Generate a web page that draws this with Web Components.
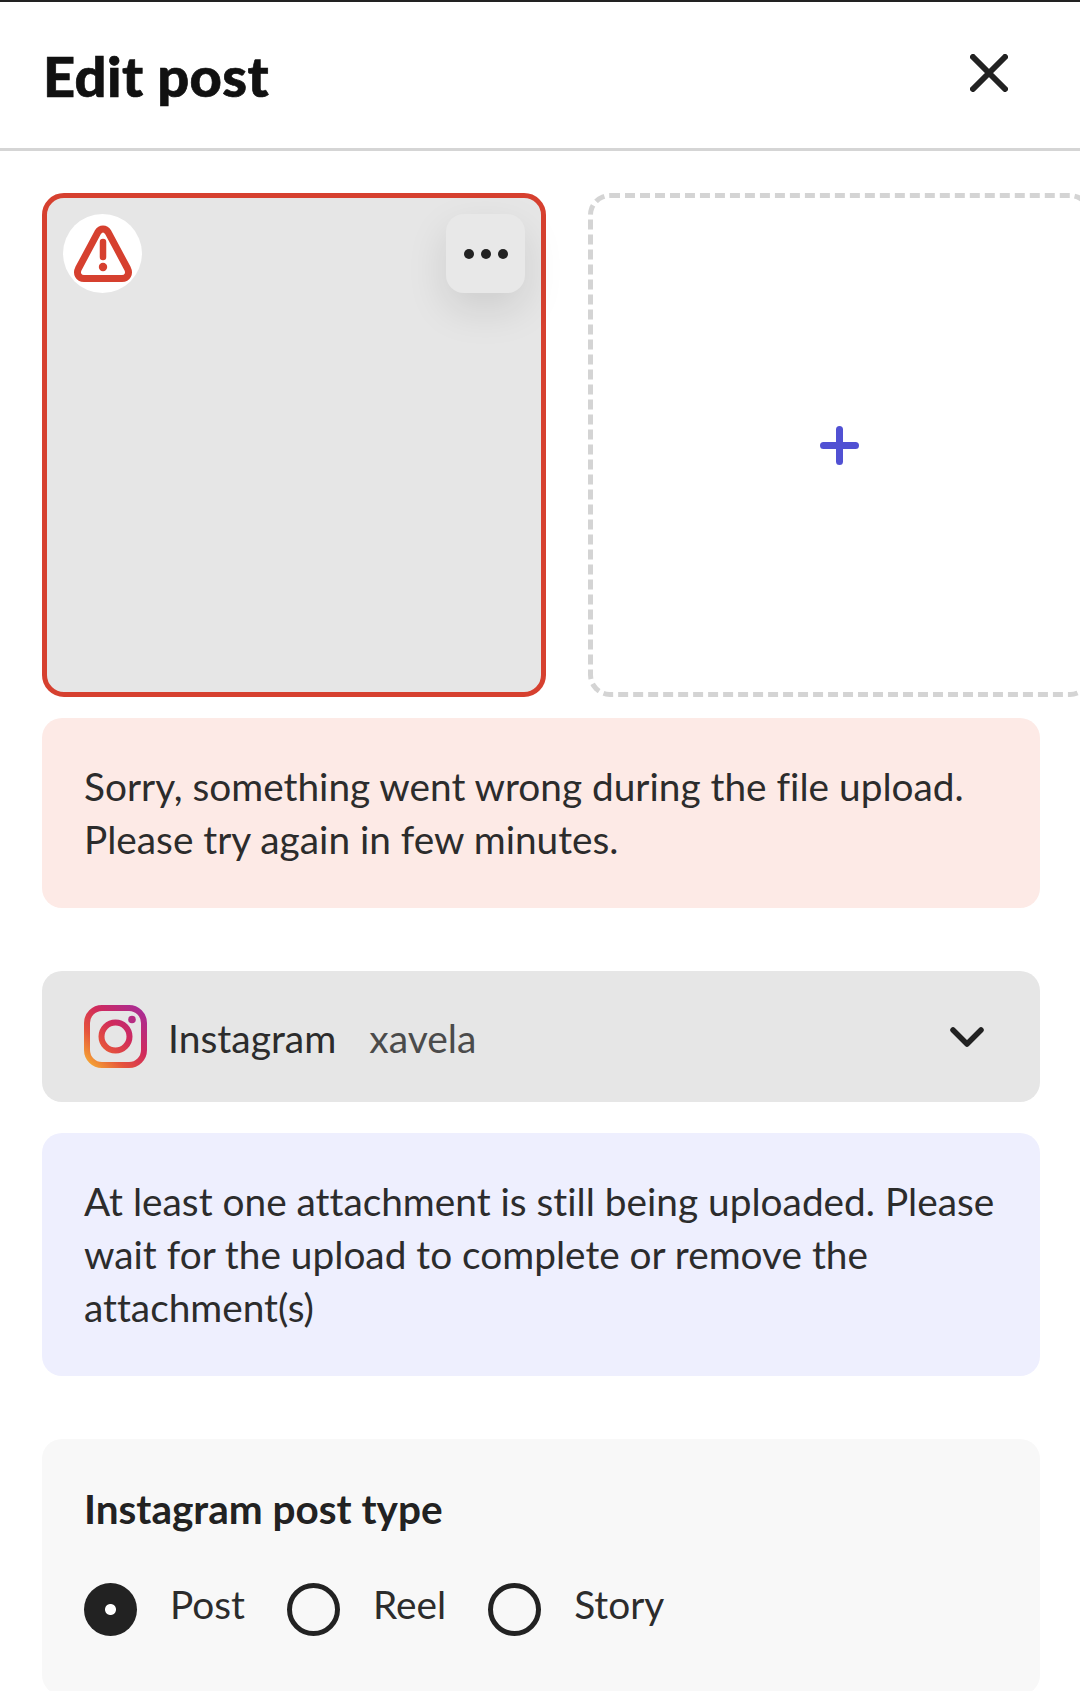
<!DOCTYPE html>
<html lang="en">
<head>
<meta charset="utf-8">
<title>Edit post</title>
<style>
	html, body {
		margin: 0;
		height: 1691px;
		overflow: hidden;
		background: #fff;
	}

	body {
		font-family: Lato, "Open Sans", "Liberation Sans", sans-serif;
		color: #2c2c2c;
		font-variant-ligatures: none;
	}
</style>
</head>
<body>
<edit-post>
	<post-header slot="header">Edit post</post-header>
	<media-row slot="media"></media-row>
	<notice-box tone="error" style="margin-top: 21px">Sorry, something went wrong during the file upload. Please try again in few minutes.</notice-box>
	<account-select style="margin-top: 63px" network="Instagram" account="xavela"></account-select>
	<notice-box tone="info" style="margin-top: 31px">At least one attachment is still being uploaded. Please wait for the upload to complete or remove the attachment(s)</notice-box>
	<post-type style="margin-top: 63px" heading="Instagram post type">
		<radio-option checked>Post</radio-option>
		<radio-option>Reel</radio-option>
		<radio-option>Story</radio-option>
	</post-type>
</edit-post>

<script>
class EditPost extends HTMLElement {

	constructor() {
		super();
		this.attachShadow({mode: 'open'}).innerHTML = `
			<style>
				:host {
					display: block;
					height: 1691px;
					overflow: hidden;
					box-sizing: border-box;
					border-top: 2px solid #222;
				}

				main {
					padding: 42px 40px 0 42px;
				}
			</style>
			<slot name="header"></slot>
			<main>
				<slot name="media"></slot>
				<slot></slot>
			</main>
		`;
	};
};

class PostHeader extends HTMLElement {

	constructor() {
		super();
		this.attachShadow({mode: 'open'}).innerHTML = `
			<style>
				:host {
					display: flex;
					align-items: center;
					justify-content: space-between;
					box-sizing: border-box;
					height: 149px;
					padding: 0 72px 0 43px;
					border-bottom: 3px solid #d5d5d5;
				}

				h1 {
					margin: 0;
					font-size: 56px;
					font-weight: 900;
					color: #111;
					letter-spacing: 0.4px;
					-webkit-text-stroke: 0.7px #111;
				}

				svg {
					display: block;
					margin-bottom: 4px;
				}
			</style>
			<h1><slot></slot></h1>
			<svg width="38" height="38" viewBox="0 0 38 38" fill="none" stroke="#222" stroke-width="6" stroke-linecap="round">
				<path d="M3 3 35 35M35 3 3 35"/>
			</svg>
		`;
	};
};

class MediaRow extends HTMLElement {

	constructor() {
		super();
		this.attachShadow({mode: 'open'}).innerHTML = `
			<style>
				:host {
					display: flex;
					gap: 42px;
					width: 1038px;
					overflow: hidden;
				}

				.tile {
					flex: none;
					box-sizing: border-box;
					width: 504px;
					height: 504px;
					border-radius: 22px;
				}

				.failed {
					display: flex;
					justify-content: space-between;
					align-items: flex-start;
					padding: 16px;
					background: #e6e6e6;
					border: 5px solid #d6402f;
				}

				.badge, .more {
					display: flex;
					align-items: center;
					justify-content: center;
					width: 79px;
					height: 79px;
				}

				.badge {
					background: #fff;
					border-radius: 50%;
				}

				.more {
					background: #e8e8e8;
					border-radius: 18px;
					box-shadow: 0 16px 42px rgba(0, 0, 0, 0.11);
				}

				.add {
					display: flex;
					align-items: center;
					justify-content: center;
					border: 5px dashed #d4d4d4;
					padding-right: 2px;
				}
			</style>
			<div class="tile failed">
				<div class="badge">
					<svg width="60" height="58" viewBox="0 0 60 58" fill="none">
						<path d="M30 4 C27.5 4 26 5.4 24.8 7.4 L5.5 43.5 C3 48.5 5.5 53.5 11 53.5 H49 C54.5 53.5 57 48.5 54.5 43.5 L35.2 7.4 C34 5.4 32.5 4 30 4Z" stroke="#d6402f" stroke-width="7" stroke-linejoin="round"/>
						<path d="M30 17V32" stroke="#d6402f" stroke-width="6.5" stroke-linecap="round"/>
						<circle cx="30" cy="42" r="4.2" fill="#d6402f"/>
					</svg>
				</div>
				<div class="more">
					<svg width="46" height="12" viewBox="0 0 46 12" fill="#222">
						<circle cx="6" cy="6" r="5"/><circle cx="23" cy="6" r="5"/><circle cx="40" cy="6" r="5"/>
					</svg>
				</div>
			</div>
			<div class="tile add">
				<svg width="39" height="39" viewBox="0 0 39 39" fill="none" stroke="#5151d3" stroke-width="7" stroke-linecap="round">
					<path d="M19.5 3.5V35.5M3.5 19.5H35.5"/>
				</svg>
			</div>
		`;
	};
};

class NoticeBox extends HTMLElement {

	constructor() {
		super();
		this.attachShadow({mode: 'open'}).innerHTML = `
			<style>
				:host {
					display: block;
					box-sizing: border-box;
					padding: 42px 42px 42px;
					border-radius: 20px;
					font-size: 38.8px;
					line-height: 53px;
					color: #2c2c2c;
				}

				:host([tone="error"]) {
					background: #fdeae6;
				}

				:host([tone="info"]) {
					background: #eeeffe;
				}
			</style>
			<slot></slot>
		`;
	};
};

class AccountSelect extends HTMLElement {

	constructor() {
		super();
		this.attachShadow({mode: 'open'}).innerHTML = `
			<style>
				:host {
					display: flex;
					align-items: center;
					box-sizing: border-box;
					height: 131px;
					padding: 0 56px 0 42px;
					border-radius: 20px;
					background: #e6e6e6;
					font-size: 39px;
				}

				.network {
					margin-left: 21px;
					margin-top: 2px;
					color: #2c2c2c;
				}

				.account {
					margin-left: 33px;
					margin-top: 2px;
					color: #4b4b4b;
				}

				.chevron {
					margin-left: auto;
				}
			</style>
			<svg width="63" height="63" viewBox="0 0 63 63" fill="none">
				<defs>
					<linearGradient id="ig" gradientUnits="userSpaceOnUse" x1="5" y1="60" x2="58" y2="4">
						<stop offset="0" stop-color="#f5a733"/>
						<stop offset="0.3" stop-color="#e5533c"/>
						<stop offset="0.6" stop-color="#d02a5c"/>
						<stop offset="1" stop-color="#a92c95"/>
					</linearGradient>
				</defs>
				<rect x="3" y="3" width="57" height="57" rx="15" stroke="url(#ig)" stroke-width="6"/>
				<circle cx="31.5" cy="31.5" r="14" stroke="url(#ig)" stroke-width="6"/>
				<circle cx="48" cy="14.5" r="3.8" fill="#b62c82"/>
			</svg>
			<span class="network"></span>
			<span class="account"></span>
			<svg class="chevron" width="34" height="22" viewBox="0 0 34 22" fill="none" stroke="#222" stroke-width="5.5" stroke-linecap="round" stroke-linejoin="round">
				<path d="M3 4 17 18 31 4"/>
			</svg>
		`;
		this.shadowRoot.querySelector('.network').textContent = this.getAttribute('network');
		this.shadowRoot.querySelector('.account').textContent = this.getAttribute('account');
	};
};

class PostType extends HTMLElement {

	constructor() {
		super();
		this.attachShadow({mode: 'open'}).innerHTML = `
			<style>
				:host {
					display: block;
					box-sizing: border-box;
					height: 256px;
					padding: 48px 42px 0;
					border-radius: 20px;
					background: #f8f8f8;
				}

				h2 {
					margin: 0;
					font-size: 40.5px;
					line-height: 44px;
					font-weight: 700;
					color: #222;
				}

				.options {
					display: flex;
					gap: 42px;
					margin-top: 41px;
				}
			</style>
			<h2></h2>
			<div class="options"><slot></slot></div>
		`;
		this.shadowRoot.querySelector('h2').textContent = this.getAttribute('heading');
	};
};

class RadioOption extends HTMLElement {

	constructor() {
		super();
		this.attachShadow({mode: 'open'}).innerHTML = `
			<style>
				:host {
					display: flex;
					align-items: center;
					gap: 33px;
					font-size: 38.8px;
					color: #2c2c2c;
				}

				.mark {
					box-sizing: border-box;
					width: 53px;
					height: 53px;
					margin-top: 11px;
					border: 5.5px solid #222;
					border-radius: 50%;
				}

				:host([checked]) .mark {
					border: 0;
					background: radial-gradient(circle, #fff 0 5px, #222 6px);
				}

				span {
					margin-bottom: 1px;
				}
			</style>
			<div class="mark"></div>
			<span><slot></slot></span>
		`;
	};
};

customElements.define('edit-post', EditPost);
customElements.define('post-header', PostHeader);
customElements.define('media-row', MediaRow);
customElements.define('notice-box', NoticeBox);
customElements.define('account-select', AccountSelect);
customElements.define('post-type', PostType);
customElements.define('radio-option', RadioOption);
</script>
</body>
</html>
